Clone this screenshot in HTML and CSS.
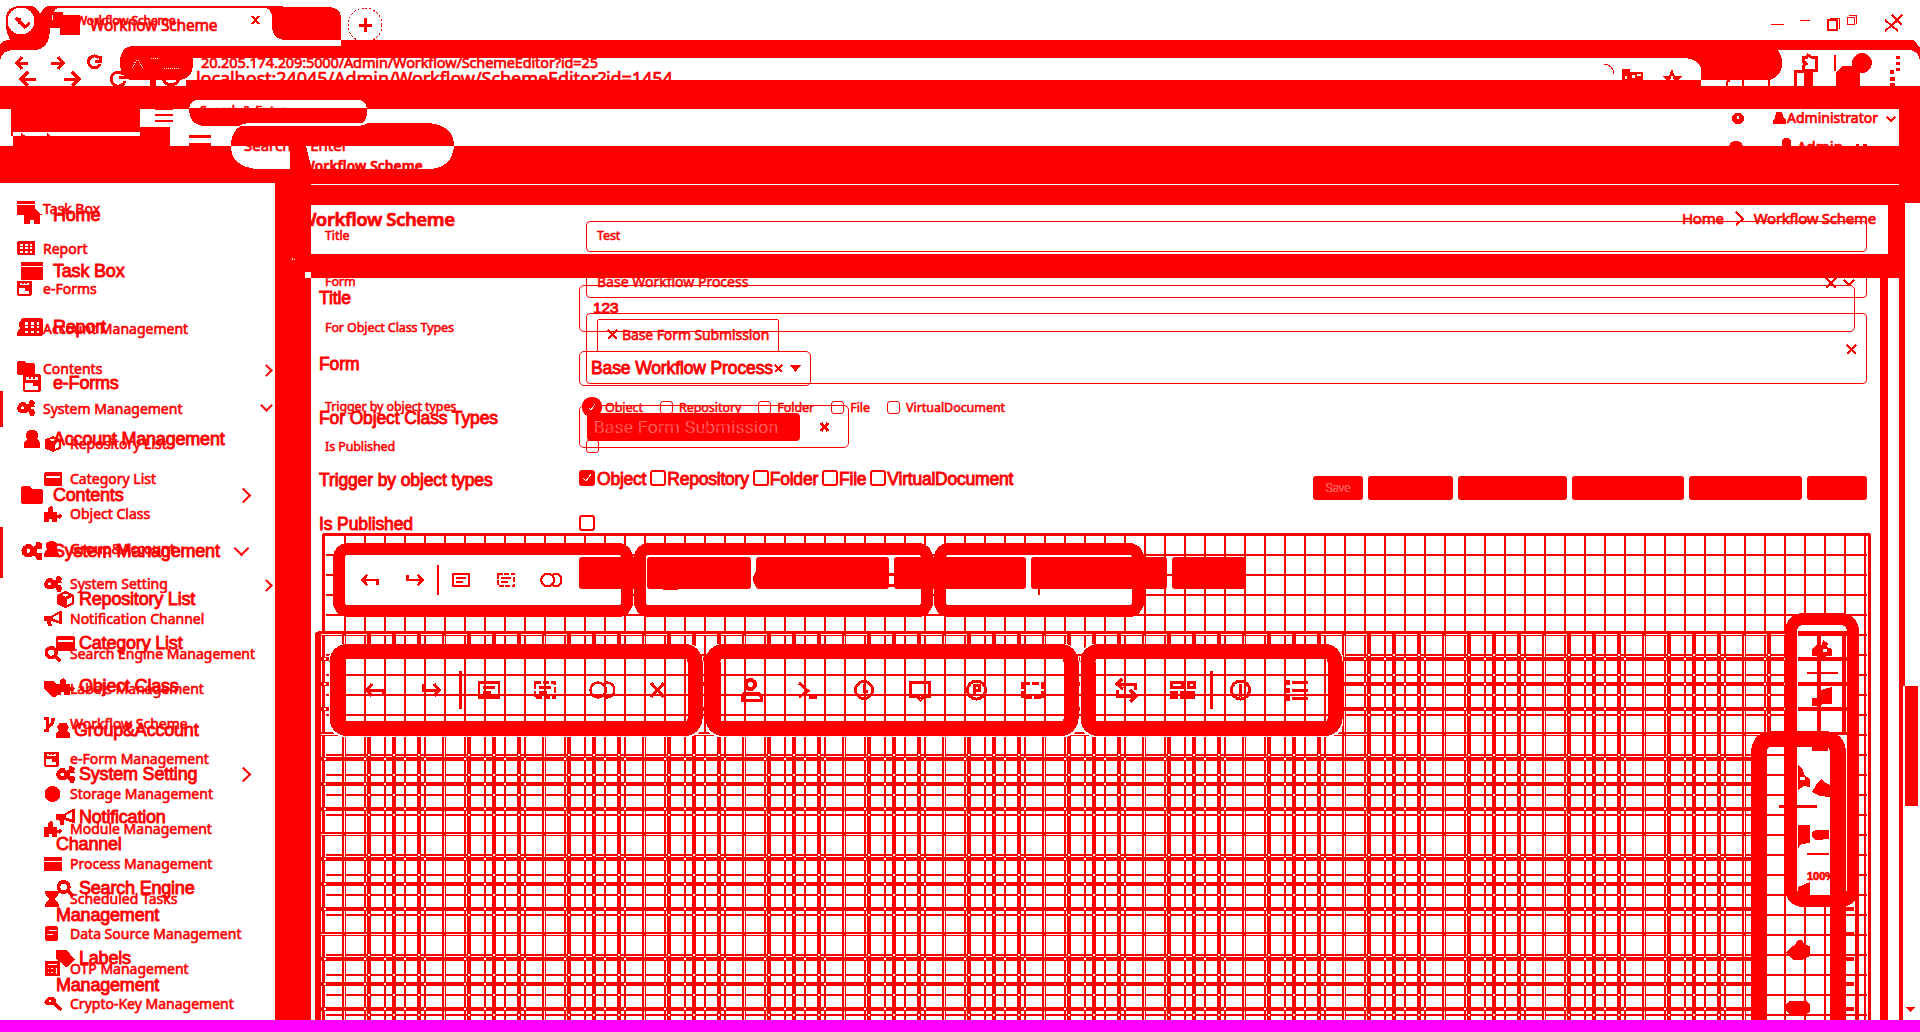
FILE: index.html
```html
<!DOCTYPE html>
<html lang="en">
<head>
<meta charset="utf-8">
<title>Workflow Scheme</title>
<link rel="stylesheet" href="styles.css">
</head>
<body>
<svg class="defs" width="0" height="0">
  <symbol id="i-win" viewBox="0 0 18 14"><path d="M0 0h18v3H0zM0 4h18v10H0z"/></symbol>
  <symbol id="i-home" viewBox="0 0 18 16"><path d="M9 0l9 8h-2v8h-5v-4H7v4H2V8H0z"/></symbol>
  <symbol id="i-table" viewBox="0 0 18 14"><path d="M1 0h16l1 1v12l-1 1H1l-1-1V1z"/><path class="cut" d="M3 3h3v2H3zM8 3h3v2H8zM13 3h2v2h-2zM3 6h3v2H3zM8 6h3v2H8zM13 6h2v2h-2zM3 10h3v2H3zM8 10h3v2H8zM13 10h2v2h-2z"/></symbol>
  <symbol id="i-form" viewBox="0 0 16 16"><path d="M1 0h14l1 1v14l-1 1H1l-1-1V1z"/><path class="cut" d="M3 3h2v1h2V3h2v1h2V3h2v2H3zM2 8h7v3h4v3H2z"/></symbol>
  <symbol id="i-user" viewBox="0 0 16 18"><path d="M8 0a5.500 5.500 0 0 1 5 9q3 2 3 5v4H0v-4q0-3 3-5a5.500 5.500 0 0 1 5-9z"/></symbol>
  <symbol id="i-folder" viewBox="0 0 18 14"><path d="M1 0h6l2 2h8l1 2v9l-1 1H1l-1-1V1z"/></symbol>
  <symbol id="i-gears" viewBox="0 0 20 17"><path d="M5 2h4l1 2 3 1v3l-1 1 1 3-3 2H4l-3-2-1-4 2-4zM14 0h3l3 2-1 3 1 2h-6l-1-3zM14 10h5l1 3-1 4h-4l-2-3z"/><path d="M12 4h3v9h-3z"/><circle class="cut" cx="6.500" cy="8.500" r="1.800"/></symbol>
  <symbol id="i-cube" viewBox="0 0 18 18"><path d="M9 0l9 4v10l-9 4-9-4V4z"/><path class="cut" d="M5 4l4-1 4 1-4 2zM11 9l5-3v6l-5 3z"/></symbol>
  <symbol id="i-card" viewBox="0 0 18 14"><path d="M1 0h16l1 1v12l-1 1H1l-1-1V1z"/><path class="cut" d="M2 4h14v1.500H2z"/></symbol>
  <symbol id="i-puzzle" viewBox="0 0 18 16"><path d="M0 6h4V2l3-2 2 2v4h4v3l3-1 2 2-2 3-3-1v4H8v-3H5v3H0z"/></symbol>
  <symbol id="i-horn" viewBox="0 0 18 16"><path d="M0 5h7l9-5h2v13h-2l-9-3 1 5H4L3 10H0z"/><path class="cut" d="M9 6l6-3v7l-6-2z"/></symbol>
  <symbol id="i-search" viewBox="0 0 18 18"><path class="line4" d="M7 2a5.500 5.500 0 1 1 0 11a5.500 5.500 0 1 1 0-11zM11 11l6 6"/></symbol>
  <symbol id="i-tag" viewBox="0 0 18 16"><path d="M0 0h10l8 9-7 7h-2L0 8z"/></symbol>
  <symbol id="i-branch" viewBox="0 0 18 16"><path class="line3" d="M3 1v13M3 11q6-1 6-8M0 2h5M0 14h5M7 3h4"/></symbol>
  <symbol id="i-disc" viewBox="0 0 18 16"><circle cx="8.500" cy="8" r="8"/></symbol>
  <symbol id="i-bars" viewBox="0 0 18 14"><path d="M0 0h18v4H0zM0 5h18v9H0z"/></symbol>
  <symbol id="i-glass" viewBox="0 0 18 18"><path d="M0 0h16v2q-1 4-5 7 4 3 5 7v2H0v-2q1-4 5-7-4-3-5-7z"/></symbol>
  <symbol id="i-db" viewBox="0 0 18 18"><path d="M2 0h11l2 2v13l-2 2H2l-2-2V2z"/><path class="cut" d="M5 5h8v1H5zM2 9h7v1H2zM4 13h8v1H4z"/></symbol>
  <symbol id="i-calc" viewBox="0 0 18 18"><path d="M1 0h15l1 1v16H1l-1-1V1z"/><path class="cut" d="M3 3h11v2H3zM3 8h2v1H3zM7 8h2v1H7zM3 12h2v1H3zM7 12h2v1H7zM12 8h2v7h-2z"/></symbol>
  <symbol id="i-key" viewBox="0 0 18 16"><path d="M5 1h5l2 3v3l6 6-1 2-3-1-5-5H3L0 7l2-4z"/><circle class="cut" cx="6" cy="5" r="1.500"/></symbol>
  <symbol id="t-undo" viewBox="0 0 22 16"><path class="line3" d="M8 2L3 8l5 6M3 8h16v6"/></symbol>
  <symbol id="t-redo" viewBox="0 0 22 16"><path class="line3" d="M14 2l5 6-5 6M19 8H3V2"/></symbol>
  <symbol id="t-doc" viewBox="0 0 24 18"><path class="line" d="M2 1.500h20v15H2zM6 6.500h12M6 11.500h8"/></symbol>
  <symbol id="t-dash" viewBox="0 0 24 18"><path class="line" stroke-dasharray="6 2" d="M2 1.500h20v15H2z"/><path class="line" d="M6 6.500h12M6 11.500h8"/></symbol>
  <symbol id="t-rings" viewBox="0 0 26 18"><circle class="line" cx="9" cy="9" r="7.500"/><path class="line" d="M15 1.500h3a7.500 7.500 0 0 1 0 15h-3M14 3q6 6 0 12"/></symbol>
</svg>

<main class="diff">
  <svg class="marks" width="1920" height="1032" viewBox="0 0 1920 1032">
    <defs>
      <pattern id="grid20" patternUnits="userSpaceOnUse" x="344" y="554" width="20" height="20"><path d="M0 0h20v2H2v18H0z"/></pattern>
      <pattern id="grid25" patternUnits="userSpaceOnUse" x="317" y="607" width="25" height="25"><path d="M0 0h25v4H4v21H0z"/></pattern>
      <!-- 100px tile: both grids meet, cancelling where they share pixels -->
      <pattern id="gap" patternUnits="userSpaceOnUse" x="344" y="634" width="100" height="100">
        <path class="cut" d="M2 0h21v1H2zM27 0h21v1H27zM52 0h21v1H52zM77 0h21v1H77z
          M0 2h1v21H0zM0 27h1v21H0zM0 52h1v21H0zM0 77h1v21H0z
          M20 24h2v2h-2zM40 24h2v2h-2zM60 24h2v2h-2zM80 24h2v2h-2z
          M20 49h2v2h-2zM40 49h2v2h-2zM60 49h2v2h-2zM80 49h2v2h-2z
          M20 74h2v2h-2zM40 74h2v2h-2zM60 74h2v2h-2zM80 74h2v2h-2z
          M24 20h2v2h-2zM24 40h2v2h-2zM24 60h2v2h-2zM24 80h2v2h-2z
          M49 20h2v2h-2zM49 40h2v2h-2zM49 60h2v2h-2zM49 80h2v2h-2z
          M74 20h2v2h-2zM74 40h2v2h-2zM74 60h2v2h-2zM74 80h2v2h-2z"/>
      </pattern>
    </defs>

    <!-- tab strip -->
    <path d="M6 20Q6 6 20 6H30Q37 6 40 14Q44 6 50 6H275L291 7H330Q341 8 341 18V40H285Q272 39 272 26V18Q272 8 264 8H58Q52 10 52 20V28H50Q50 50 33 50H14Q2 50 0 60V45Q2 40 10 40Q7 34 6 28z"/>
    <circle class="cut" cx="21" cy="21" r="13.500"/>
    <path class="line3" d="M16 18l9 9 5-4M20 18l-1 6"/>
    <path d="M53 12h10v3h17v20H60v-7h-8zM341 40h4v6h-4z"/>
    <path class="line2" d="M252 16l7 8M259 16l-7 8"/>
    <circle class="dot" cx="365" cy="25" r="17"/>
    <path class="line3" d="M359 25h13M365.500 18v14"/>
    <path class="line1" d="M1771 24.500h13M1800 20.500h10"/>
    <path class="line2" d="M1828 20h9v10h-9z"/><path class="line1" d="M1830 18.500h9.500V29M1847.500 17.500h7v7h-7zM1849 15.500h7v8"/>
    <path class="line2" d="M1885 20l13 11M1898 20l-13 11M1892 15l10 10M1902 15l-10 10"/>

    <!-- address row -->
    <path d="M345 40H1914l6 8v12q-2-10-12-10H1777q5 4 5 13 0 13-12 17H1701V68q-4-10-19-10H193V66q-2 14-15 14H130q-10-4-10-17 0-17 14-17H345z"/>
    <path d="M186 80H1701v6H1899V109H0V86H186z"/>
    <path d="M150 76h6v10h-6z"/><circle class="line3" cx="171" cy="77" r="8"/>
    <path class="cutline" stroke-dasharray="1 1" d="M132 68l5-9 6 9M151 58.500h8M164 68.500h16"/>
    <path class="line3" d="M28 63H18M22 57l-5 6 5 6M51 63h11M58 57l5 6-5 6M99 58a6 6 0 1 0 1 6M100 56v5h-5M36 79H21M28 72l-7 7 7 7M64 79h14M72 72l7 7-7 7M123 74a7 7 0 1 0 2 7M125 71v6h-6"/>
    <path class="line1" d="M1604 64q9 1 10 10"/>
    <path d="M1622 69h8v3h13v8h-21z"/><path class="cut" d="M1632 75h3v3h-3zM1637 74h4v2h-4zM1625 76h2v3h-2z"/>
    <path d="M1672 69l3 7h8l-5 4h-12l-4-4h7z"/><path class="cut" d="M1672 75l2 5h-4z"/>
    <path class="line2" d="M1727 86v-4l3-2M1743 80v6M1769 80v6"/>
    <path class="line3" d="M1803 57h4l1-2 3 2h5v13h-13v-4l3-2-3-3zM1795 86V71h9"/><path d="M1804 70h9v16h-9z"/>
    <path class="line2" d="M1835 55v16"/><circle cx="1862" cy="63" r="10"/><path d="M1836 86V72l6-6h12l6 6v14z"/>
    <path d="M1896 56h4v3h-4zM1896 62h4v3h-4zM1896 68h4v3h-4zM1890 70h4v4h-4zM1890 77h5v4h-5zM1890 83h5v3h-5z"/>

    <!-- app header -->
    <path d="M11 109H140V127H170V146H1899V86H1920V203H1905V278H1903V1020H1899V278H1888V1020H1880V278H311V1020H275V183H0V146H13V136H11z"/>
    <path class="cut" d="M13 132h127v4H50l-3-3v3H26l-5-3v3h-8zM311 205H1888V254H311zM311 184H1899v1H311zM305 272h6v6h-6zM292 258h1v2h-1zM294 259h1v1h-1z"/>
    <path d="M155 109h18v1h-18zM155 114h18v2h-18zM155 120h18v2h-18zM189 135h22v3h-22zM189 143h22v3h-22z"/>
    <path class="cut" d="M189 108q2-8 10-8h158q8 0 10 8z"/>
    <path d="M189 108h178v6q-2 12-12 12H203q-14-2-14-18zM231 146q0-23 24-23H428q26 2 26 23z"/>
    <path class="cut" d="M240 125q5-2 15-2H368q-5 3-13 3H240zM231 146H454q-2 23-27 23H256q-25-3-25-23z"/>
    <circle cx="1738" cy="118.500" r="6"/><path class="cut" d="M1737 116h2v3h-2z"/>
    <path d="M1776 112h6l2 6 2 2v4h-13v-4l2-2zM1729 146q1-5 7-5t7 5zM1782 146v-6l2-2h4l3 3v5z"/>
    <path class="line2" d="M1887 117l4 4 4-4"/><path class="line3" d="M1856 145h3M1863 145h4"/>
    <path class="line2" d="M1736 212l7 7-7 6"/>
    <path class="line2" d="M1826 278l10 10M1836 278l-10 10M1844 280l5 5 5-5M1847 345l9 9M1856 345l-9 9"/>
    <path d="M1899 203h6v483h-6zM1905 686h13v120h-13zM1905 1007h10l-5 5z"/>

    <!-- narrow revision: canvas, grid and tool frames -->
    <path fill="url(#grid20)" d="M326 536H1867V1020H326z"/>
    <path d="M322 536q0-3 3-3H1868q3 0 3 3V1020h-3V536H325V1020h-3z"/>
    <g class="frame" stroke-width="12">
      <rect x="339" y="549" width="288" height="62" rx="9"/><rect x="640" y="549" width="287" height="62" rx="9"/><rect x="940" y="549" width="198" height="62" rx="9"/>
    </g>
    <!-- wide revision: canvas and grid -->
    <path fill="url(#grid25)" d="M320 634H1855V1020H320z"/>
    <path fill="url(#gap)" d="M320 634H1855V1020H320z"/>
    <path d="M315 636q0-5 5-5H1855q4 0 4 5V1020h-4V634H320V1020h-5z"/>
    <g class="cut"><rect x="329" y="644" width="374" height="93" rx="15"/><rect x="705" y="644" width="374" height="93" rx="15"/><rect x="1080" y="644" width="263" height="93" rx="15"/><path d="M1759 740h96v280h-96z"/></g>
    <path fill="url(#grid20)" d="M337 650H1335V730H337zM1759 740H1855V1020H1759z"/>
    <path fill="url(#grid25)" d="M1846 900h8V1020h-8z"/>
    <path d="M1855 636h4V1020h-4z"/>
    <g class="frame clear" stroke-width="15">
      <rect x="337" y="651.500" width="358" height="77" rx="10"/><rect x="713" y="651.500" width="358" height="77" rx="10"/><rect x="1088" y="651.500" width="247" height="77" rx="10"/>
    </g>
    <!-- vertical tool frames -->
    <rect class="frame" stroke-width="12" x="1791" y="619" width="62" height="282" rx="12"/>
    <path fill="url(#grid25)" d="M1798 631H1847V735H1798z"/><path d="M1798 631h49v3h-49z"/>
    <path class="frame clear" stroke-width="16" d="M1759 1034V753q0-14 14-14h51q14 0 14 14v281"/>
    <g>
      <path d="M1812 650l4-5h6l1-5 5 3-1 4 5 2v7h-5l-4 2-3-2h-8zM1812 698h6l3-8 11-3v17h-9l-3 2h-8zM1812 741h16v10h-16zM1798 765l5 4 1 6 6 4v8l-6-1-6 4zM1812 792l4-7 5-6 5 4 4 2v12l-10-1zM1812 832l4-2h13v9l-13 1-4-3zM1798 825h12v18l-9 1-3 5zM1798 887l12-5v15h-12zM1786 953l4-5 5-3q4-11 10 0l5 1v10l-8 4h-8zM1786 1004l4-3h16l4 3v8l-4 2h-16l-4-3z"/>
      <path d="M1807 672h31v2h-31zM1779 805h38v3h-38zM1807 853h22v2h-22z"/>
      <path class="cut" d="M1823 649h4v3h-4zM1800 777h5v3h-5z"/>
    </g>

    <!-- tool glyphs -->
    <g class="glyphs">
      <use href="#t-undo" x="360" y="572" width="20" height="16"/><use href="#t-redo" x="405" y="572" width="20" height="16"/>
      <path d="M437 565h2v30h-2zM459 671h3v38h-3zM1210 671h3v38h-3z"/>
      <use href="#t-doc" x="451" y="572" width="20" height="16"/><use href="#t-dash" x="496" y="572" width="20" height="16"/><use href="#t-rings" x="540" y="572" width="22" height="16"/>
      <use href="#t-undo" x="364" y="682" width="22" height="16"/><use href="#t-redo" x="420" y="682" width="22" height="16"/>
      <g class="bold"><use href="#t-doc" x="477" y="681" width="24" height="18"/><use href="#t-dash" x="533" y="681" width="24" height="18"/><use href="#t-rings" x="589" y="681" width="26" height="18"/></g>
      <path class="line3" d="M651 683l13 14M664 683l-13 14M742 700v-4l3-3h13l3 3v4zM799 683l9 8-9 6M809 697h8M910.500 682.500h19v14h-6l-3 3-3-3h-7z"/>
      <circle class="line4" cx="750.500" cy="684.500" r="4.500"/>
      <circle class="line3" cx="864" cy="690" r="8.500"/><path class="line3" d="M864 684v7h4"/>
      <circle class="line3" cx="976.500" cy="690" r="9"/><path class="line3" d="M974 696v-11h5v5h-4"/>
      <path class="line3" stroke-dasharray="7 2" d="M1022.500 683.500h20v14h-20z"/>
      <path class="line3" d="M1122 679l-5 5 6 5M1117 684h18v6M1130 690l6 6-6 6M1136 696h-19v-6"/>
      <path class="line3" d="M1171.500 682.500h11v5h-11zM1188 682.500h6v5h-6z"/><path d="M1170 691h8v8h-8zM1180 691h15v8h-15z"/>
      <circle class="line3" cx="1240.500" cy="690" r="9"/><path class="line3" d="M1240.500 684v13"/>
      <path class="line3" d="M1292 682h16M1292 690.500h16M1292 698h16"/><path d="M1285 680h5v5h-5zM1285 688h5v5h-5zM1285 696h5v5h-5z"/>
    </g>
    <path d="M756 571l-3 6q-1 4 2 8l3 4zM889 573h5v3h-5zM889 584h5v3h-5zM663 589h15v1h-15zM1038 589h2v6h-2z"/>
    <path d="M0 391h3v36H0zM0 527h3v51H0z"/>
  </svg>

  <div class="bar tab-a">Workflow Scheme</div>
  <div class="bar tab-b">Workflow Scheme</div>
  <div class="bar url-a">20.205.174.209:5000/Admin/Workflow/SchemeEditor?id=25</div>
  <div class="bar url-b">localhost:24045/Admin/Workflow/SchemeEditor?id=1454</div>
  <div class="bar find-a">Search &amp; Enter</div>
  <div class="bar find-b">Search &amp; Enter</div>
  <div class="bar user-a">Administrator</div>
  <div class="bar user-b">Admin</div>
  <h2 class="bar head-a">Workflow Scheme</h2>
  <h1 class="bar head-b">Workflow Scheme</h1>
  <svg class="marks" width="1920" height="1032"><path d="M290 146h16l5 20v17h-21z"/></svg>
  <div class="bar crumbs"><span>Home</span><span>Workflow Scheme</span></div>

  <nav class="side side-a">
    <ul>
      <li><svg><use href="#i-win"/></svg>Task Box</li>
      <li><svg><use href="#i-table"/></svg>Report</li>
      <li><svg><use href="#i-form"/></svg>e-Forms</li>
      <li><svg><use href="#i-user"/></svg>Account Management</li>
      <li><svg><use href="#i-folder"/></svg>Contents<i class="chev right"></i></li>
      <li><svg><use href="#i-gears"/></svg>System Management<i class="chev down"></i></li>
    </ul>
    <ul class="sub">
      <li><svg><use href="#i-cube"/></svg>Repository List</li>
      <li><svg><use href="#i-card"/></svg>Category List</li>
      <li><svg><use href="#i-puzzle"/></svg>Object Class</li>
      <li><svg><use href="#i-user"/></svg>Group&amp;Account</li>
      <li><svg><use href="#i-gears"/></svg>System Setting<i class="chev right"></i></li>
      <li><svg><use href="#i-horn"/></svg>Notification Channel</li>
      <li><svg><use href="#i-search"/></svg>Search Engine Management</li>
      <li><svg><use href="#i-tag"/></svg>Labels Management</li>
      <li><svg><use href="#i-branch"/></svg>Workflow Scheme</li>
      <li><svg><use href="#i-form"/></svg>e-Form Management</li>
      <li><svg><use href="#i-disc"/></svg>Storage Management</li>
      <li><svg><use href="#i-puzzle"/></svg>Module Management</li>
      <li><svg><use href="#i-bars"/></svg>Process Management</li>
      <li><svg><use href="#i-glass"/></svg>Scheduled Tasks</li>
      <li><svg><use href="#i-db"/></svg>Data Source Management</li>
      <li><svg><use href="#i-calc"/></svg>OTP Management</li>
      <li><svg><use href="#i-key"/></svg>Crypto-Key Management</li>
    </ul>
  </nav>

  <nav class="side side-b">
    <ul>
      <li><svg><use href="#i-home"/></svg>Home</li>
      <li><svg><use href="#i-win"/></svg>Task Box</li>
      <li><svg><use href="#i-table"/></svg>Report</li>
      <li><svg><use href="#i-form"/></svg>e-Forms</li>
      <li><svg><use href="#i-user"/></svg>Account Management</li>
      <li><svg><use href="#i-folder"/></svg>Contents<i class="chev right"></i></li>
      <li><svg><use href="#i-gears"/></svg>System Management<i class="chev down"></i></li>
    </ul>
    <ul class="sub">
      <li><svg><use href="#i-cube"/></svg>Repository List</li>
      <li><svg><use href="#i-card"/></svg>Category List</li>
      <li><svg><use href="#i-puzzle"/></svg>Object Class</li>
      <li class="tight"><svg><use href="#i-user"/></svg>Group&amp;Account</li>
      <li class="open"><svg><use href="#i-gears"/></svg>System Setting<i class="chev right"></i></li>
      <li><svg><use href="#i-horn"/></svg>Notification<br>Channel</li>
      <li><svg><use href="#i-search"/></svg>Search Engine<br>Management</li>
      <li><svg><use href="#i-tag"/></svg>Labels<br>Management</li>
    </ul>
  </nav>

  <section class="form form-a">
    <div class="row"><label>Title</label><div class="field">Test</div></div>
    <div class="row"><label>Form</label><div class="field low">Base Workflow Process</div></div>
    <div class="row tall"><label>For Object Class Types</label><div class="field multi"><span class="chip"><svg width="11" height="11"><path class="line2" d="M1 1l9 9M10 1l-9 9"/></svg>Base Form Submission</span></div></div>
    <div class="row checks"><label>Trigger by object types</label><div class="opts"><b class="blob"><svg width="20" height="20"><path class="cutline" d="M7 11l2 2 4-6"/></svg></b><span>Object</span><i></i><span>Repository</span><i></i><span>Folder</span><i></i><span>File</span><i></i><span>VirtualDocument</span></div></div>
    <div class="row pub"><label>Is Published</label><div class="opts"><i></i></div></div>
    <div class="btns"><b>Save</b><b></b><b></b><b></b><b></b><b></b></div>
  </section>

  <section class="form form-b">
    <div class="row title"><label>Title</label><div class="field">123</div></div>
    <div class="row pick"><label>Form</label><div class="field"><span>Base Workflow Process</span><svg width="28" height="13"><path class="line2" d="M2 3l7 7M9 3l-7 7"/><path d="M17 3h11l-5.500 7z"/></svg></div></div>
    <div class="row types"><label>For Object Class Types</label><div class="field"><span class="tag">Base Form Submission</span><svg width="10" height="10"><path class="line3" d="M1 1l7 8M8 1l-7 8"/></svg></div></div>
    <div class="row checks"><label>Trigger by object types</label><div class="opts"><i class="on"><svg width="16" height="16"><path class="cutline" d="M4 8l3 3 5-7"/></svg></i><span>Object</span><i></i><span>Repository</span><i></i><span>Folder</span><i></i><span>File</span><i></i><span>VirtualDocument</span></div></div>
    <div class="row pub"><label>Is Published</label><div class="opts"><i></i></div></div>
    <div class="btns"><b></b><b></b><b></b><b></b><b></b><b></b></div>
  </section>

  <div class="scale">100%</div>
  <footer class="edge"></footer>
</main>
</body>
</html>
```
FILE: styles.css
```css
* { box-sizing: border-box; }
body { margin: 0; background: #fff; color: #f00; overflow: hidden; font-family: "Noto Sans", sans-serif; }
.defs { position: absolute; }
.diff { position: relative; width: 1920px; height: 1032px; overflow: hidden; white-space: nowrap; }
svg { fill: #f00; shape-rendering: crispEdges; }
.cut { fill: #fff; }
.line, .line1, .line2, .line3, .line4 { fill: none; stroke: #f00; stroke-width: 2.5; }
.line1 { stroke-width: 1; }
.line2 { stroke-width: 2; }
.line3 { stroke-width: 3; }
.line4 { stroke-width: 4; }
.dot { fill: none; stroke: #f00; stroke-dasharray: 2 2; }
.cutline { fill: none; stroke: #fff; stroke-width: 1; }
.frame { fill: #fff; stroke: #f00; }
.frame.clear { fill: none; }

/* The two page revisions are stacked on one another */
.marks, .bar, .side, .form, .scale { position: absolute; }
.marks { inset: 0; }
.bar, .side, .form, .scale { -webkit-text-stroke: .7px #f00; }
.bar { margin: 0; font-weight: 400; line-height: 20px; }
.tab-a { left: 76px; top: 11px; font-size: 12px; letter-spacing: -.1px; }
.tab-b { left: 90px; top: 15px; font-size: 15.5px; letter-spacing: -.2px; }
.url-a { left: 201px; top: 52px; font-size: 14.5px; letter-spacing: -.12px; }
.url-b { left: 196px; top: 68px; font-size: 18px; letter-spacing: -.06px; height: 12px; overflow: hidden; }
.find-a { left: 200px; top: 102px; font-size: 12.5px; height: 6px; line-height: 18px; overflow: hidden; }
.find-b { left: 244px; top: 135px; font-size: 15px; }
.user-a { left: 1787px; top: 108px; font-size: 14px; }
.user-b { left: 1797px; top: 136px; font-size: 15px; }
.head-a { left: 302px; top: 156px; font-size: 13.5px; font-weight: 600; letter-spacing: .2px; }
.head-b { left: 299px; top: 209px; font-size: 18.5px; font-weight: 600; letter-spacing: -.4px; }
.crumbs { left: 1682px; top: 208px; display: flex; gap: 30px; font-size: 15px; letter-spacing: -.25px; }

.side ul { list-style: none; margin: 0; padding: 0; }
.side li { display: flex; align-items: center; }
.chev { width: 9px; height: 9px; border: solid #f00; border-width: 2px 2px 0 0; margin-left: auto; transform: rotate(45deg); }
.chev.down { transform: rotate(135deg); margin-right: 2px; }

.side-a { left: 0; top: 188px; width: 275px; font-size: 14px; -webkit-text-stroke-width: .6px; }
.side-a li { height: 40px; padding: 0 4px 0 17px; }
.side-a svg { width: 18px; height: 16px; margin-right: 8px; }
.side-a .chev { position: relative; top: 2px; }
.side-a .chev.down { top: -3px; margin-right: 0; }
.side-a .sub { margin-top: -2px; }
.side-a .sub li { height: 35px; padding-left: 44px; }
.side-a svg:has([href="#i-user"]), .side-a svg:has([href="#i-form"]) { width: 15px; margin-right: 11px; }

.side-b { left: 0; top: 187px; width: 275px; font-family: "Liberation Sans", sans-serif; font-size: 18px; letter-spacing: -.2px; -webkit-text-stroke-width: .9px; }
.side-b li { height: 56px; padding: 0 26px 0 21px; }
.side-b svg { width: 22px; height: 18px; margin-right: 10px; }
.side-b .chev { width: 11px; height: 11px; }
.side-b .chev.down { position: relative; top: -3px; }
.side-b .sub { margin-top: -1px; }
.side-b .sub li { display: block; height: auto; padding: 8.3px 0 8.3px 56px; line-height: 27px; }
.side-b .sub svg { width: 19px; height: 17px; margin-right: 4px; vertical-align: -3px; }
.side-b .sub .tight svg { width: 14px; }
.side-b .sub .open { display: flex; padding-right: 26px; }

.row { display: flex; }
.field { border: 1px solid #f00; border-radius: 4px; }
.opts { display: flex; align-items: center; }
.btns { display: flex; gap: 5px; }
.btns b { background: #f00; border-radius: 3px; }
.opts i { border: 1px solid #f00; border-radius: 3px; }

.form-a { left: 325px; top: 221px; width: 1542px; font-size: 12.5px; letter-spacing: -.1px; -webkit-text-stroke-width: .55px; }
.form-a label { width: 261px; flex: none; line-height: 30px; }
.form-a .row { height: 31px; margin-bottom: 15px; }
.form-a .field { flex: 1; padding-left: 10px; line-height: 28px; }
.form-a .low { line-height: 27px; font-size: 14px; letter-spacing: 0; }
.form-a .tall { height: 71px; margin-bottom: 13px; }
.form-a .multi { padding-top: 5px; }
.chip { display: inline-flex; align-items: center; gap: 4px; width: 182px; height: 33px; padding: 0 0 2px 9px; border: 1px solid #f00; border-radius: 2px; font-size: 14px; }
.form-a .checks { height: 20px; margin-bottom: 24px; }
.form-a .checks label { line-height: 20px; }
.form-a .opts { width: 440px; }
.form-a .opts i { width: 13px; height: 13px; margin: 0 6px 0 17px; }
.form-a .opts span { letter-spacing: -.05px; }
.blob { width: 20px; height: 20px; margin: 0 3px 0 -4px; border-radius: 9px; background: #f00; flex: none; }
.form-a .pub { height: 11px; margin-bottom: 24px; align-items: center; }
.form-a .pub i { margin: 0; }
.form-a .btns { justify-content: flex-end; }
.form-a .btns b { height: 24px; width: 60px; color: #fff; font: 300 12px/24px Roboto, sans-serif; text-align: center; -webkit-text-stroke: .3px #f00; }
.form-a .btns b:nth-child(1) { width: 50px; }
.form-a .btns b:nth-child(2) { width: 85px; }
.form-a .btns b:nth-child(3) { width: 109px; }
.form-a .btns b:nth-child(4) { width: 112px; }
.form-a .btns b:nth-child(5) { width: 113px; }

.form-b { left: 319px; top: 285px; width: 1536px; font-family: "Liberation Sans", sans-serif; font-size: 17.5px; letter-spacing: -.12px; -webkit-text-stroke-width: .9px; }
.form-b label { width: 260px; flex: none; line-height: 26px; }
.form-b .field { display: flex; align-items: center; border-width: 1px; border-radius: 5px; }
.form-b .title { height: 47px; margin-bottom: 19px; }
.form-b .title .field { flex: 1; padding: 0 0 0 13px; font-size: 15.5px; align-items: flex-start; line-height: 44px; }
.form-b .pick { height: 35px; margin-bottom: 19px; }
.form-b .pick .field { width: 232px; padding-left: 11px; }
.form-b .types { height: 43px; margin-bottom: 22px; }
.form-b .types .field { width: 270px; gap: 20px; padding-left: 7px; }
.tag { width: 213px; height: 28px; border-radius: 4px; background: #f00; color: #fff; padding-left: 7px; font: 300 17px/28px Roboto, sans-serif; letter-spacing: .6px; -webkit-text-stroke: .5px #f00; }
.form-b .checks { height: 16px; margin-bottom: 29px; }
.form-b .checks label { line-height: 20px; }
.form-b .checks span { letter-spacing: -.22px; position: relative; top: 1px; }
.form-b .opts i { width: 16px; height: 16px; border-width: 2px; margin: 0 1px 0 4px; }
.form-b .opts .on { margin: 0 2px 0 0; background: #f00; }
.form-b .opts svg { display: block; margin: -2px; }
.form-b .pub { height: 16px; margin-bottom: 26px; align-items: center; }
.form-b .pub label { line-height: 16px; padding-top: 2px; }
.form-b .pub i { margin: 0; }
.form-b .btns { padding-left: 260px; }
.form-b .btns b { height: 32px; width: 63px; }
.form-b .btns b:nth-child(2) { width: 104px; }
.form-b .btns b:nth-child(3) { width: 133px; }
.form-b .btns b:nth-child(4) { width: 132px; }
.form-b .btns b:nth-child(5) { width: 136px; }
.form-b .btns b:nth-child(6) { width: 74px; }

.scale { left: 1807px; top: 869px; width: 23px; overflow: hidden; font: 700 11px/15px "Liberation Sans", sans-serif; }
.edge { position: absolute; inset: auto 0 0; height: 12px; background: #f0f; }
```
